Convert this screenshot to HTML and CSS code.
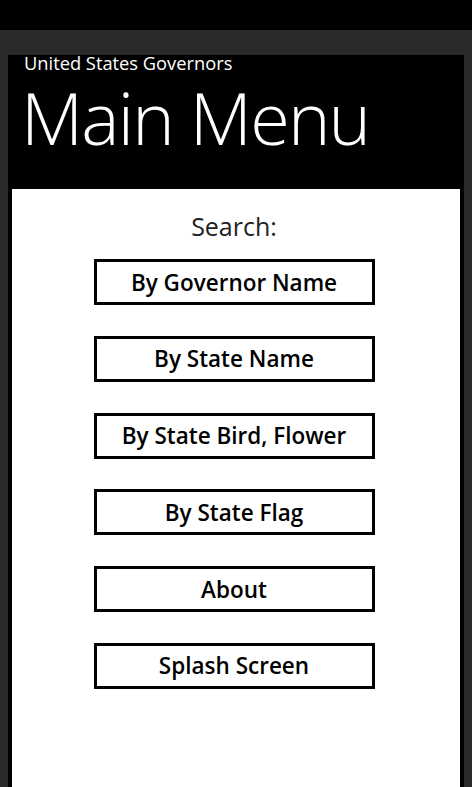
FILE: index.html
```html
<!DOCTYPE html>
<html>
<head>
<meta charset="utf-8">
<link rel="stylesheet" href="styles.css">
</head>
<body>
<div class="statusbar"></div>
<div class="frame">
  <div class="panel">
    <header class="header">
      <div class="app-title">United States Governors</div>
      <h1 class="page-title">Main Menu</h1>
    </header>
    <main class="content">
      <div class="search-label">Search:</div>
      <div class="buttons">
        <button class="btn">By Governor Name</button>
        <button class="btn">By State Name</button>
        <button class="btn">By State Bird, Flower</button>
        <button class="btn">By State Flag</button>
        <button class="btn">About</button>
        <button class="btn">Splash Screen</button>
      </div>
    </main>
  </div>
</div>
</body>
</html>
```
FILE: styles.css
```css
html, body {
  margin: 0;
  padding: 0;
  height: 100%;
}
body {
  background: #2a2a2a;
  font-family: "Open Sans", "Noto Sans", sans-serif;
  display: flex;
  flex-direction: column;
  overflow: hidden;
}
.statusbar {
  height: 30px;
  background: #000;
  flex: none;
}
.frame {
  flex: 1;
  padding: 25px 8px 0 8px;
  display: flex;
}
.panel {
  flex: 1;
  background: #000;
  padding: 0 4px;
  display: flex;
  flex-direction: column;
}
.header {
  height: 134px;
  color: #fff;
  padding-left: 12px;
  flex: none;
  box-sizing: border-box;
}
.app-title {
  font-size: 18.3px;
  line-height: 18px;
  margin-top: -1px;
}
.page-title {
  margin: 0 0 0 -3px;
  font-weight: 300;
  font-size: 72px;
  line-height: 90px;
  letter-spacing: -1.8px;
}
.content {
  flex: 1;
  background: #fff;
  display: flex;
  flex-direction: column;
  align-items: center;
  padding-top: 21px;
  padding-right: 4px;
}
.search-label {
  font-size: 25px;
  line-height: 32px;
  color: #222;
  margin-bottom: 17px;
}
.buttons {
  display: flex;
  flex-direction: column;
  gap: 30.8px;
}
.btn {
  width: 281px;
  height: 46px;
  box-sizing: border-box;
  border: 3px solid #000;
  background: #fff;
  font-family: "Open Sans", "Noto Sans", sans-serif;
  font-size: 22.5px;
  font-weight: 600;
  color: #000;
  padding: 0;
  margin: 0;
}
```
